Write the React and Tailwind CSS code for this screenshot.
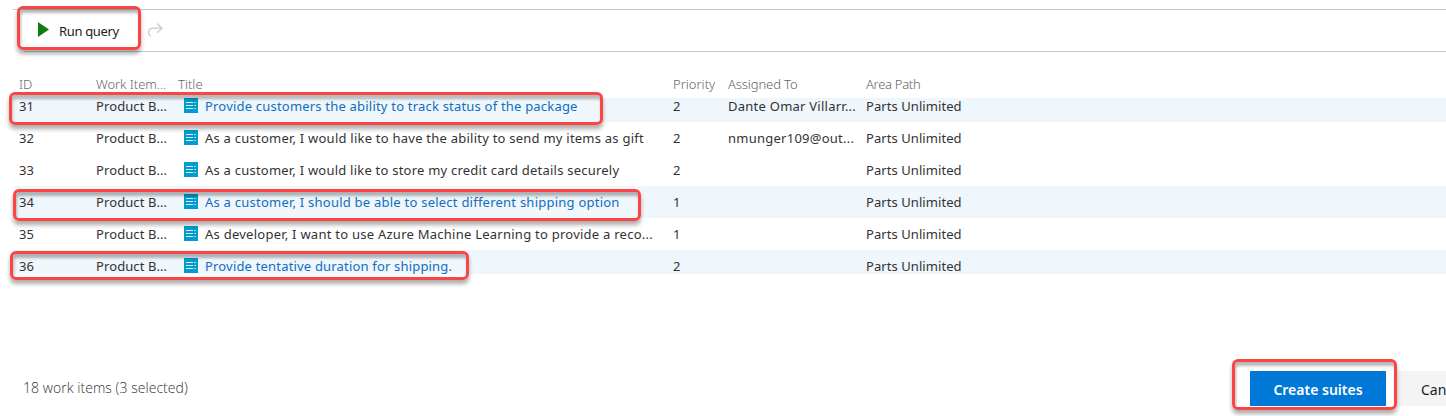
const items = [
  { id: 31, title: 'Provide customers the ability to track status of the package', priority: 2, assigned: 'Dante Omar Villarr...', selected: true, tracking: 'tracking-[0.2px]' },
  { id: 32, title: 'As a customer, I would like to have the ability to send my items as gift', priority: 2, assigned: 'nmunger109@out...', tracking: 'tracking-[0.235px]' },
  { id: 33, title: 'As a customer, I would like to store my credit card details securely', priority: 2, assigned: '', tracking: 'tracking-[0.225px]' },
  { id: 34, title: 'As a customer, I should be able to select different shipping option', priority: 1, assigned: '', selected: true, tracking: 'tracking-[0.235px]' },
  { id: 35, title: 'As developer, I want to use Azure Machine Learning to provide a reco...', priority: 1, assigned: '', tracking: 'tracking-[0.25px]' },
  { id: 36, title: 'Provide tentative duration for shipping.', priority: 2, assigned: '', selected: true, tracking: 'tracking-[0.18px]' },
];

const columns = 'grid grid-cols-[77px_82px_495px_55px_138px_1fr] pl-[5px] whitespace-nowrap';

function BacklogIcon() {
  return (
    <svg className="mr-[7px] mb-[2px] h-[15px] w-[14px] shrink-0" viewBox="0 0 14 15" shapeRendering="crispEdges">
      <rect width="14" height="15" fill="#009ccc" />
      <path d="M2 4.5h7M2 7.5h7M2 10.5h7" stroke="#d5eff8" />
      <path d="M10 4.5h2M10 7.5h2M10 10.5h2" stroke="#a5dcee" />
    </svg>
  );
}

function Highlight({ className }) {
  return (
    <div
      className={`pointer-events-none absolute rounded-[6px] border-3 border-[#fb4444] shadow-[0_4px_4px_0px_rgba(0,0,0,0.32),inset_1px_4px_3px_rgba(0,0,0,0.28)] ${className}`}
    />
  );
}

function Row({ item }) {
  return (
    <div className={`${columns} h-8 shrink-0 items-center ${item.selected ? 'bg-[#eff6fc]' : ''}`}>
      <span>{item.id}</span>
      <span className="tracking-[0.1px]">Product B...</span>
      <div className="flex items-center pl-[6px]">
        <BacklogIcon />
        <span className={`${item.tracking} ${item.selected ? 'text-[#106ebe]' : ''}`}>{item.title}</span>
      </div>
      <span>{item.priority}</span>
      <span className="tracking-[0.25px]">{item.assigned}</span>
      <span className="tracking-[0.07px]">Parts Unlimited</span>
    </div>
  );
}

export default function App() {
  return (
    <div className="relative flex h-[416px] w-full flex-col overflow-hidden bg-white font-['Noto_Sans',sans-serif] text-[13px] leading-5 text-[#333333]">
      <div className="mt-[9px] ml-[13px] flex h-[42px] items-center border-t border-[#c8c8c8] pl-[25px]">
        <svg className="-mt-[2px] h-[15px] w-[11px]" viewBox="0 0 11 15">
          <path d="M0 0l11 7.5L0 15z" fill="#107c10" />
        </svg>
        <span className="ml-[10px] w-[60px] tracking-[-0.35px] whitespace-nowrap text-[#222222]">Run query</span>
        <svg className="-mt-[2px] ml-[28px] h-4 w-4" viewBox="0 0 16 16" fill="none" stroke="#cccccc" strokeWidth="1.3">
          <path d="M10 1.500L15 6.200l-5 4.700M15 6.200H5.500a4.200 4.200 0 0 0-1.500 8" />
        </svg>
      </div>
      <div className="ml-6 h-px bg-[#c8c8c8]" />
      <div className="mt-[22px] ml-[14px] h-6 font-light text-[#666666]">
        <div className={columns}>
          <span>ID</span>
          <span className="tracking-[-0.05px]">Work Item...</span>
          <span>Title</span>
          <span>Priority</span>
          <span className="tracking-[-0.1px]">Assigned To</span>
          <span className="tracking-[-0.3px]">Area Path</span>
        </div>
      </div>
      <div className="ml-[14px] h-[176px] overflow-hidden">
        <div className="-mt-2 flex flex-col">
          {items.map((item) => (
            <Row key={item.id} item={item} />
          ))}
        </div>
      </div>
      <div className="mt-[97px] flex h-[35px] items-center">
        <span className="-mt-px ml-[23px] flex-1 font-['Open_Sans',sans-serif] text-sm font-light tracking-[0.05px] text-[#333333]">
          18 work items (3 selected)
        </span>
        <button className="h-[35px] w-[136px] bg-[#0078d7] pt-[2px] text-sm font-semibold text-white">Create suites</button>
        <button className="ml-2 h-[35px] w-[52px] overflow-hidden bg-[#f4f4f4] pt-[2px] pl-[27px] text-left text-sm whitespace-nowrap text-[#222222]">
          Cancel
        </button>
      </div>
      <Highlight className="top-[6px] left-[17px] h-[44px] w-[124px]" />
      <Highlight className="top-[92px] left-[9px] h-[33px] w-[594px]" />
      <Highlight className="top-[189px] left-[13px] h-[32px] w-[628px]" />
      <Highlight className="top-[251px] left-[10px] h-[29px] w-[459px]" />
      <Highlight className="top-[359px] left-[1232px] h-[51px] w-[165px]" />
    </div>
  );
}
